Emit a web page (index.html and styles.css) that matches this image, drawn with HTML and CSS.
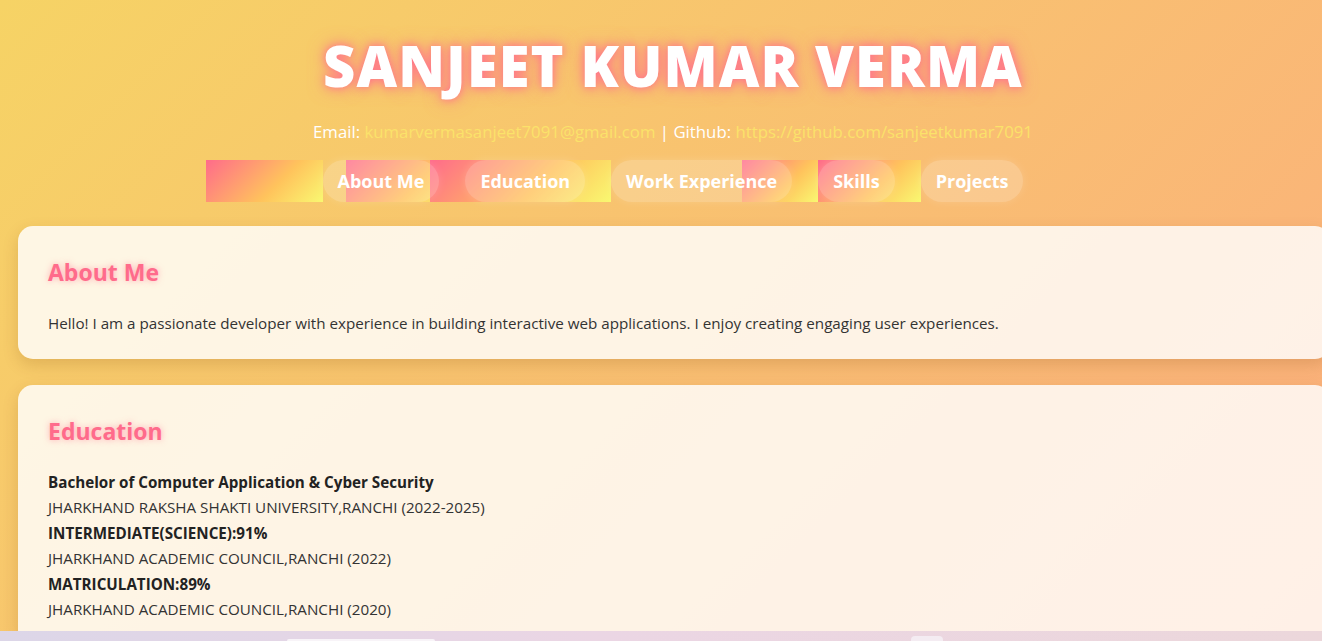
FILE: index.html
```html
<!DOCTYPE html>
<html lang="en">
<head>
<meta charset="utf-8">
<title>Sanjeet Kumar Verma</title>
<link rel="stylesheet" href="styles.css">
</head>
<body>
<header class="header">
  <h1 class="name">SANJEET KUMAR VERMA</h1>
  <p class="contact">Email: <a class="contact-link" href="#">kumarvermasanjeet7091@gmail.com</a> | Github: <a class="contact-link" href="#">https://github.com/sanjeetkumar7091</a></p>
  <nav class="nav">
    <a class="nav-link" href="#about">About Me</a>
    <a class="nav-link" href="#education">Education</a>
    <a class="nav-link" href="#work">Work Experience</a>
    <a class="nav-link" href="#skills">Skills</a>
    <a class="nav-link" href="#projects">Projects</a>
  </nav>
</header>
<main class="main">
  <section class="card" id="about">
    <h2 class="card-title">About Me</h2>
    <p class="text">Hello! I am a passionate developer with experience in building interactive web applications. I enjoy creating engaging user experiences.</p>
  </section>
  <section class="card" id="education">
    <h2 class="card-title">Education</h2>
    <p class="text"><strong>Bachelor of Computer Application &amp; Cyber Security</strong><br>JHARKHAND RAKSHA SHAKTI UNIVERSITY,RANCHI (2022-2025)<br><strong>INTERMEDIATE(SCIENCE):91%</strong><br>JHARKHAND ACADEMIC COUNCIL,RANCHI (2022)<br><strong>MATRICULATION:89%</strong><br>JHARKHAND ACADEMIC COUNCIL,RANCHI (2020)</p>
  </section>
</main>
<div class="strip">
  <span class="strip-tab strip-tab-a"></span>
  <span class="strip-tab strip-tab-b"></span>
</div>
</body>
</html>
```
FILE: styles.css
```css
html {
  height: 100%;
  overflow: hidden;
  background-color: #f9b874;
  background-image: linear-gradient(135deg, #f6d365 0%, #fda085 100%);
  background-size: 1322px 1322px;
  background-repeat: no-repeat;
}
body {
  margin: 0;
  font-family: "Open Sans", "Noto Sans", sans-serif;
  color: #333;
  min-height: 100%;
}
.header {
  padding: 29px 0 0 24px;
  text-align: center;
}
.name {
  margin: 0;
  font-size: 56px;
  line-height: 72px;
  font-weight: 800;
  color: #fff;
  letter-spacing: 1.1px;
  text-shadow: 0 0 8px #ff758c, 0 0 18px rgba(255, 107, 139, 0.7);
}
.contact {
  margin: 19px 0 0;
  font-size: 16.8px;
  line-height: 24px;
  color: #fff;
}
.contact-link {
  color: #fbe26a;
  text-decoration: none;
}
.nav {
  display: flex;
  justify-content: center;
  margin-top: 16px;
  gap: 26px;
}
.nav-link {
  position: relative;
  display: block;
  padding: 10px 15px;
  border-radius: 25px;
  font-size: 18px;
  line-height: 22px;
  font-weight: 700;
  color: #fff;
  text-decoration: none;
  background: rgba(255, 255, 255, 0.2);
  box-shadow: 0 0 8px rgba(255, 255, 255, 0.15);
}
.nav-link::before {
  content: "";
  position: absolute;
  top: 0;
  left: -100%;
  width: 100%;
  height: 100%;
  z-index: -1;
  background: linear-gradient(135deg, #ff6b8b 0%, #ffc35c 60%, #f9f871 100%);
}
.main {
  padding: 24px 0 0 18px;
}
.card {
  box-sizing: border-box;
  width: 1312px;
  margin-bottom: 26px;
  padding: 31px 30px 22px;
  border-radius: 15px;
  background: rgba(255, 255, 255, 0.82);
  box-shadow: 0 6px 16px rgba(120, 60, 0, 0.18);
}
.card-title {
  margin: 0 0 24px;
  font-size: 23px;
  line-height: 30px;
  font-weight: 700;
  color: #ff6b8b;
  text-shadow: 0 0 6px rgba(255, 107, 139, 0.55);
}
.text {
  margin: 0;
  font-size: 15.2px;
  line-height: 25.5px;
  color: #333;
}
.text strong {
  color: #222;
}
.strip {
  position: fixed;
  left: 0;
  right: 0;
  bottom: 0;
  height: 10px;
  background: linear-gradient(90deg, #dcd6e8 0%, #ebd6e4 45%, #ecd7db 100%);
}
.strip-tab {
  position: absolute;
  bottom: 0;
  background: #f4ecf2;
  border-radius: 4px 4px 0 0;
}
.strip-tab-a {
  left: 287px;
  width: 148px;
  height: 2px;
  background: #f8f4f8;
}
.strip-tab-b {
  left: 911px;
  width: 32px;
  height: 5px;
}
```
